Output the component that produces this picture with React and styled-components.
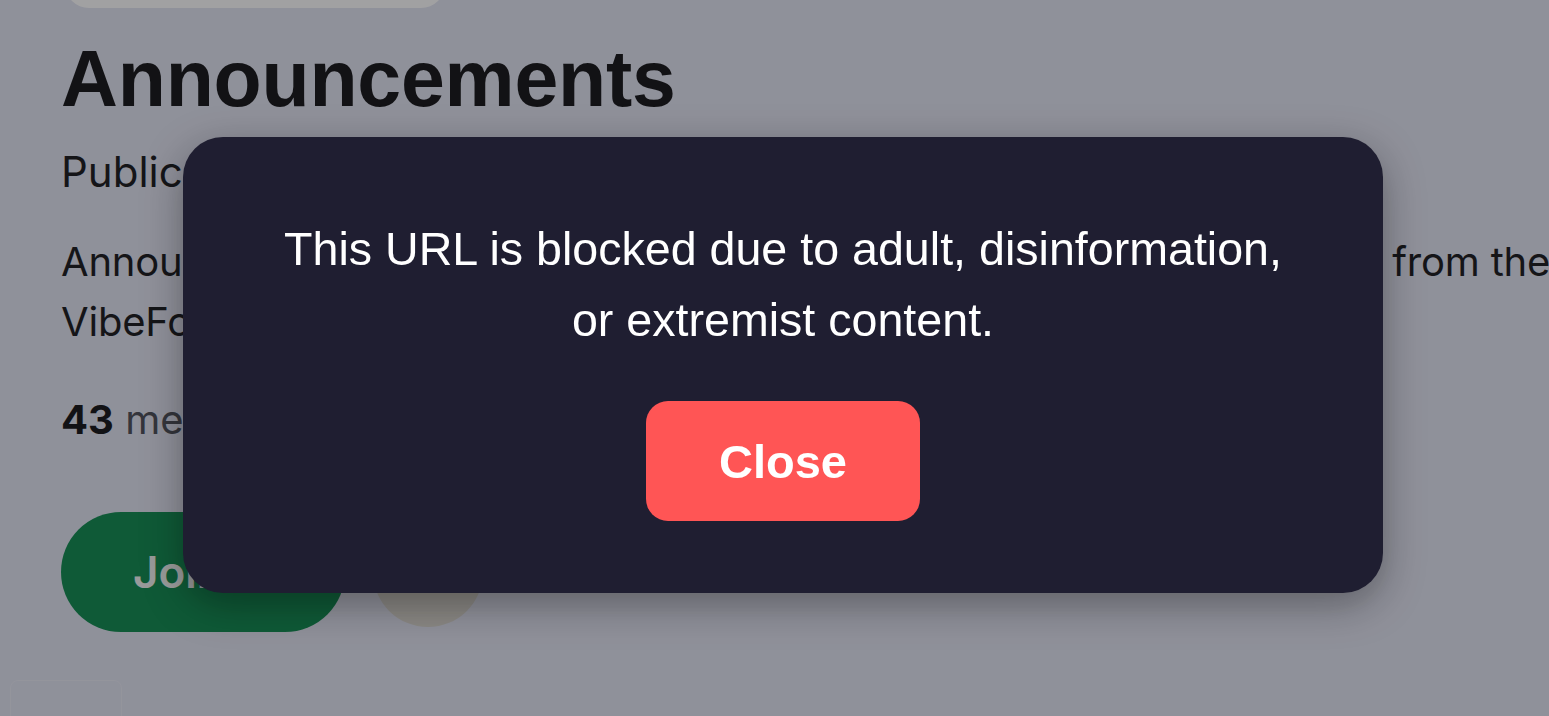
import React from 'react';
import styled, { createGlobalStyle } from 'styled-components';

/* Global */
const GlobalStyle = createGlobalStyle`
  html, body {
    margin: 0;
    padding: 0;
    height: 100%;
    overflow: hidden;
    background: #e2e4f2;
  }
  body {
    font-family: Inter, "Liberation Sans", sans-serif;
    color: #111214;
  }
`;

/* Page (behind the dialog) */
const Page = styled.div`
  display: flex;
  flex-direction: column;
  align-items: flex-start;
  padding: 0 0 0 61px;
  margin-top: -40px;
  width: 1700px;
`;

const TopPill = styled.div`
  width: 380px;
  height: 48px;
  margin-left: 4px;
  border-radius: 24px;
  background: #ffffff;
`;

const Heading = styled.h1`
  margin: 28px 0 0;
  font-family: "Liberation Sans", Arial, sans-serif;
  font-weight: 700;
  font-size: 78.8px;
  line-height: 86px;
  letter-spacing: -0.2px;
`;

const Visibility = styled.p`
  margin: 20px 0 0;
  font-size: 42px;
  line-height: 60px;
  color: #16171a;
`;

const Description = styled.p`
  margin: 30px 0 0;
  font-size: 40px;
  line-height: 60px;
  letter-spacing: -0.2px;
  color: #16171a;
  white-space: nowrap;
`;

const Members = styled.p`
  margin: 38px 0 0;
  font-size: 40px;
  line-height: 60px;
  color: #4a4c55;

  b {
    color: #111214;
    font-weight: 700;
  }
`;

const Actions = styled.div`
  display: flex;
  align-items: center;
  gap: 28px;
  margin-top: 62px;
`;

const JoinButton = styled.button`
  width: 284px;
  height: 120px;
  border: none;
  border-radius: 60px;
  background: #0c894d;
  color: #f2f4f2;
  font-family: Inter, "Liberation Sans", sans-serif;
  font-weight: 600;
  font-size: 44px;
  text-align: left;
  padding: 0 0 0 72px;
`;

const RoundButton = styled.button`
  width: 110px;
  height: 110px;
  border: none;
  border-radius: 50%;
  background: #d9d5cd;
`;

const Card = styled.div`
  width: 110px;
  height: 80px;
  margin: 48px 0 0 -51px;
  border: 1px solid #e9ebf6;
  border-radius: 8px;
`;

/* Dialog */
const Overlay = styled.div`
  position: fixed;
  inset: 0;
  display: flex;
  align-items: center;
  justify-content: center;
  padding: 14px 0 0 17px;
  background: rgba(20, 20, 22, 0.4);
`;

const Modal = styled.div`
  width: 1200px;
  box-sizing: border-box;
  padding: 77px 60px 72px;
  border-radius: 40px;
  background: #1f1e31;
  box-shadow: 0 12px 40px rgba(0, 0, 0, 0.35);
  display: flex;
  flex-direction: column;
  align-items: center;
`;

const Message = styled.p`
  margin: 0;
  font-family: "Liberation Sans", Arial, sans-serif;
  font-size: 46.6px;
  line-height: 71px;
  color: #ffffff;
  text-align: center;
`;

const CloseButton = styled.button`
  margin-top: 45px;
  width: 274px;
  height: 120px;
  border: none;
  border-radius: 22px;
  background: #ff5555;
  color: #ffffff;
  font-family: "Liberation Sans", Arial, sans-serif;
  font-weight: 700;
  font-size: 47px;
  cursor: pointer;
`;

/* Componentes */
export default function App() {
  return (
    <>
      <GlobalStyle />
      <Page>
        <TopPill />
        <Heading>Announcements</Heading>
        <Visibility>Public group</Visibility>
        <Description>
          Announcements, release notes and official news for members, straight from the
          <br />
          VibeForge team.
        </Description>
        <Members>
          <b>43</b> members
        </Members>
        <Actions>
          <JoinButton>Join</JoinButton>
          <RoundButton />
        </Actions>
        <Card />
      </Page>
      <Overlay>
        <Modal>
          <Message>
            This URL is blocked due to adult, disinformation,
            <br />
            or extremist content.
          </Message>
          <CloseButton>Close</CloseButton>
        </Modal>
      </Overlay>
    </>
  );
}
